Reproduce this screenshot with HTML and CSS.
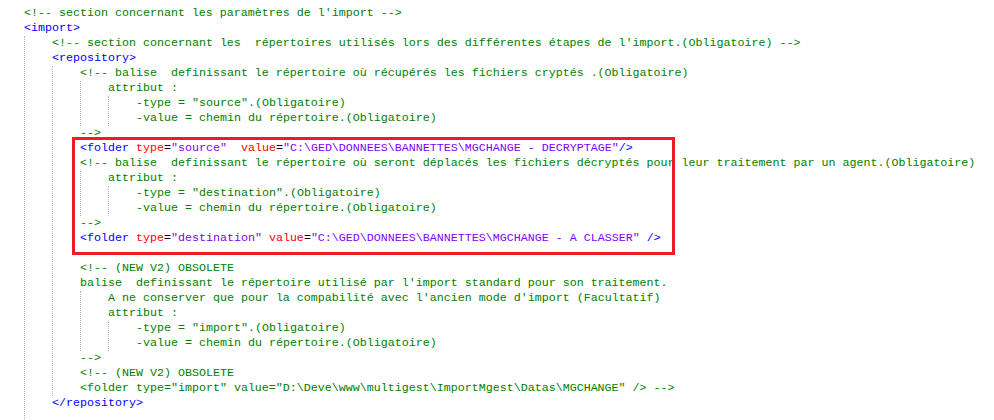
FILE: index.html
```html
<!DOCTYPE html>
<html lang="fr">
<head>
    <meta charset="UTF-8">
    <title>import.xml</title>
    <link rel="stylesheet" href="styles.css">
</head>
<body>
    <div class="code">
        <div class="ln c">&lt;!-- section concernant les paramètres de l'import --&gt;</div>
        <div class="ln"><span class="t">&lt;import&gt;</span></div>
        <div class="blk">
            <div class="ln c">&lt;!-- section concernant les  répertoires utilisés lors des différentes étapes de l'import.(Obligatoire) --&gt;</div>
            <div class="ln"><span class="t">&lt;repository&gt;</span></div>
            <div class="blk">
                <div class="ln c">&lt;!-- balise  definissant le répertoire où récupérés les fichiers cryptés .(Obligatoire)</div>
                <div class="blk">
                    <div class="ln c">attribut :</div>
                    <div class="blk">
                        <div class="ln c">-type = "source".(Obligatoire)</div>
                        <div class="ln c">-value = chemin du répertoire.(Obligatoire)</div>
                    </div>
                </div>
                <div class="ln c">--&gt;</div>

                <!-- zone encadrée en rouge -->
                <div class="highlight">
                    <div class="ln"><span class="t">&lt;folder </span><span class="a">type</span>=<span class="v">"source"</span>  <span class="a">value</span>=<span class="v">"C:\GED\DONNEES\BANNETTES\MGCHANGE - DECRYPTAGE"</span><span class="t">/&gt;</span></div>
                    <div class="ln c">&lt;!-- balise  definissant le répertoire où seront déplacés les fichiers décryptés pour leur traitement par un agent.(Obligatoire)</div>
                    <div class="blk">
                        <div class="ln c">attribut :</div>
                        <div class="blk">
                            <div class="ln c">-type = "destination".(Obligatoire)</div>
                            <div class="ln c">-value = chemin du répertoire.(Obligatoire)</div>
                        </div>
                    </div>
                    <div class="ln c">--&gt;</div>
                    <div class="ln"><span class="t">&lt;folder </span><span class="a">type</span>=<span class="v">"destination"</span> <span class="a">value</span>=<span class="v">"C:\GED\DONNEES\BANNETTES\MGCHANGE - A CLASSER"</span> <span class="t">/&gt;</span></div>
                </div>

                <div class="ln"> </div>
                <div class="ln c">&lt;!-- (NEW V2) OBSOLETE</div>
                <div class="ln c">balise  definissant le répertoire utilisé par l'import standard pour son traitement.</div>
                <div class="blk">
                    <div class="ln c">A ne conserver que pour la compabilité avec l'ancien mode d'import (Facultatif)</div>
                    <div class="ln c">attribut :</div>
                    <div class="blk">
                        <div class="ln c">-type = "import".(Obligatoire)</div>
                        <div class="ln c">-value = chemin du répertoire.(Obligatoire)</div>
                    </div>
                </div>
                <div class="ln c">--&gt;</div>
                <div class="ln c">&lt;!-- (NEW V2) OBSOLETE</div>
                <div class="ln c">&lt;folder type="import" value="D:\Deve\www\multigest\ImportMgest\Datas\MGCHANGE" /&gt; --&gt;</div>
            </div>
            <div class="ln"><span class="t">&lt;/repository&gt;</span></div>
            <div class="ln"> </div>
        </div>
    </div>
</body>
</html>
```

FILE: styles.css
```css
body {
    margin: 0;
    padding: 0;
    background-color: #fff;
    overflow: hidden;
}
.code {
    padding: 6px 0 0 24px;
    font-family: "Liberation Mono", "Courier New", monospace;
    font-size: 11.67px;
    line-height: 15px;
    color: #000;
}
.ln {
    white-space: pre;
    height: 15px;
}
/* indentation avec guide pointillé */
.blk {
    border-left: 1px dotted #b8b8b8;
    padding-left: 27px;
}
.c {
    color: #008000;
}
.t {
    color: #0000ff;
}
.a {
    color: #ff0000;
}
.v {
    color: #8000ff;
}
.highlight {
    position: relative;
}
.highlight::after {
    content: "";
    position: absolute;
    left: -8px;
    top: -4px;
    bottom: -9px;
    width: 603px;
    border: 3px solid #ed1c24;
    box-sizing: border-box;
    pointer-events: none;
}
```
